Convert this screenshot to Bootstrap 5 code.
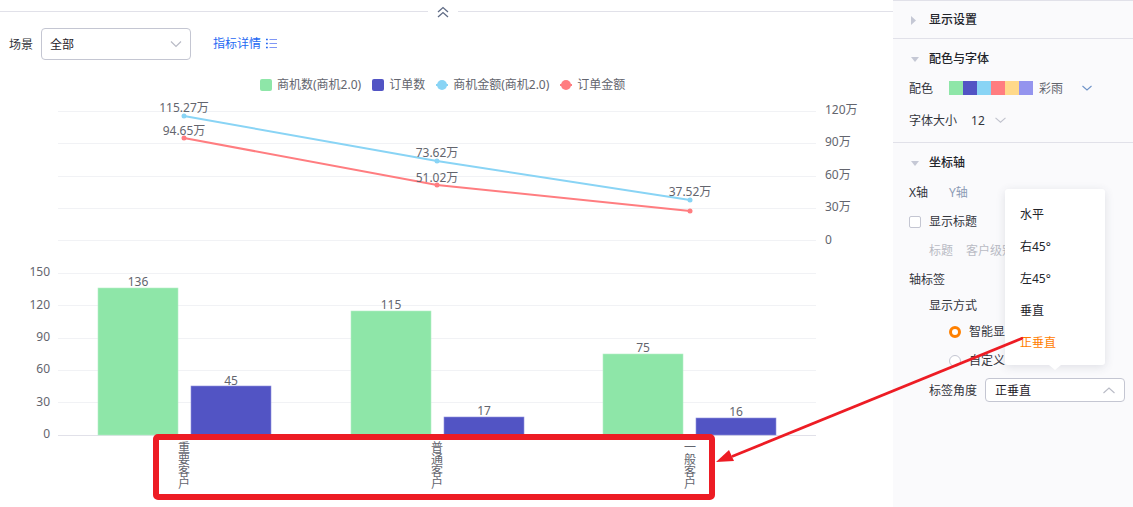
<!DOCTYPE html>
<html lang="zh-CN">
<head>
<meta charset="utf-8">
<title>图表设置</title>
<link href="https://cdn.jsdelivr.net/npm/bootstrap@5.3.0/dist/css/bootstrap.min.css" rel="stylesheet">
<style>
html,body{height:507px;overflow:hidden;background:#fff}
body{position:relative;font:12px/1.2 "Noto Sans","Noto Sans CJK SC",sans-serif;color:#33353c}
svg text{font-family:"Noto Sans","Noto Sans CJK SC",sans-serif;font-size:12px;fill:#63656e}
.page-wrap{width:1133px;height:507px}
.main-col{width:893px;flex:none}
.fold-row{height:22px}
.fold-line{height:1px;background:#e1e1e9}
.fold-line-a{width:428px}
.fold-line-b{width:435px}
.fold-ico{width:30px;height:16px}
.filter-row{height:44px;padding-left:9px}
.filter-row>span,.scene-box>span,.angle-box>span,.set-row>span,.ind-1>span,.ind-2>span{padding-top:2px}
.set-row>.color-strip{padding-top:0}
.scene-box{width:150px;height:32px;border:1px solid #c4c6d2;border-radius:4px;padding:0 8px;margin-left:8px;margin-right:22px;color:#1f2128;background:#fff}
.detail-link{color:#2468f2;text-decoration:none;gap:5px}
.legend-row{height:34px;padding-left:260px;padding-top:4px;color:#63656e;font-size:12px}
.lg-sq{width:12px;height:12px;border-radius:2px;margin-right:5px}
.lg-mark{width:12px;height:10px;margin-right:5px}
.lg-text{margin-right:11px}
.lg-text-wide{margin-right:11px}
.c-a{background:#8ee6a8}.c-b{background:#5254c4}.c-c{background:#89d4f5}.c-d{background:#ff7d80}.c-e{background:#ffd98a}.c-f{background:#9494ee}
.chart-box{display:block;width:893px;height:407px}
.side-col{width:240px;flex:none;background:#fafafc;height:507px;border-top:1px solid #e1e1e9}
.side-sec{border-bottom:1px solid #e1e1e9}
.sec-a{height:38px;padding-top:5px}.sec-b{height:104px;padding-top:6px}.sec-c{padding-top:6px}
.sec-title{height:26px;font-weight:500;color:#22242a;padding-left:18px;padding-top:2px}
.tri{width:18px;flex:none}
.set-row{padding-left:16px}
.set-h32{height:32px}
.sec-title+.set-h32{margin-top:1px}
.color-strip{margin-left:16px;margin-right:6px}
.color-strip i{display:block;width:14px;height:14px}
.muted-name{color:#63656e;width:43px}
.font-num{margin-left:14px;width:24px}
.h29{height:29px}.h28{height:28px}.h25{height:25px}.h27{height:27px}.h31{height:31px}
.first-row{margin-top:3px}
.ind-1{padding-left:36px}.ind-2{padding-left:56px}
.y-tab{color:#8c9ab5;margin-left:21px}
.fake-check{width:12px;height:12px;border:1px solid #c4c6d2;border-radius:2px;background:#fff;margin-right:8px}
.grey-txt{color:#b9bbc4}
.level-txt{margin-left:13px}
.radio-on{width:12px;height:12px;border:3px solid #ff8000;border-radius:50%;background:#fff;margin-right:8px}
.radio-off{width:12px;height:12px;border:1px solid #c4c6d2;border-radius:50%;background:#fff;margin-right:8px}
.angle-box{width:140px;height:24px;border:1px solid #c4c6d2;border-radius:4px;margin-left:8px;padding:0 9px;background:#fff;color:#1f2128}
.angle-pop.dropdown-menu{position:absolute;left:1005px;top:189px;width:100px;height:176px;min-width:0;padding:10px 0 0;border:0;border-radius:3px;background:#fff;box-shadow:0 2px 10px rgba(60,65,90,.14);font-size:12px;display:block}
.angle-pop::after{content:"";position:absolute;left:44px;bottom:-5px;border:6px solid transparent;border-bottom:0;border-top:5px solid #fff}
.angle-pop .dropdown-item{height:32px;line-height:32px;padding:0 15px;color:#22242a}
.angle-pop .dropdown-item.picked{color:#ff7d00;background:none}
.mark-layer{position:absolute;left:0;top:0;width:1133px;height:507px;pointer-events:none;z-index:1001}
.axis-cat{writing-mode:vertical-rl;text-orientation:upright}
</style>
</head>
<body>
<div class="page-wrap d-flex">
  <main class="main-col">
    <div class="fold-row d-flex align-items-center">
      <div class="fold-line fold-line-a"></div>
      <svg class="fold-ico" viewBox="0 0 30 16"><path d="M10 9l5-4.500 5 4.500M10 14l5-4.500 5 4.500" fill="none" stroke="#5f6b85" stroke-width="1.300"/></svg>
      <div class="fold-line fold-line-b"></div>
    </div>
    <div class="filter-row d-flex align-items-center">
      <span>场景</span>
      <div class="scene-box d-flex align-items-center justify-content-between">
        <span>全部</span>
        <svg width="12" height="8" viewBox="0 0 12 8"><path d="M1 1.500l5 5 5-5" fill="none" stroke="#b9bbc6" stroke-width="1.200"/></svg>
      </div>
      <a class="detail-link d-flex align-items-center" href="#">指标详情
        <svg width="11" height="11" viewBox="0 0 11 11"><path d="M3.500 1.500H11M3.500 5.500H11M3.500 9.500H11" stroke="#8097f5" stroke-width="1.200"/><path d="M0 1.500h1.800M0 5.500h1.800M0 9.500h1.800" stroke="#2468f2" stroke-width="1.400"/></svg>
      </a>
    </div>
    <div class="legend-row d-flex align-items-center">
      <span class="lg-sq c-a"></span><span class="lg-text">商机数(商机2.0)</span>
      <span class="lg-sq c-b"></span><span class="lg-text">订单数</span>
      <svg class="lg-mark" viewBox="0 0 12 10"><path d="M0 5h12" stroke="#89d4f5" stroke-width="2"/><circle cx="6" cy="5" r="5" fill="#89d4f5"/></svg><span class="lg-text-wide">商机金额(商机2.0)</span>
      <svg class="lg-mark" viewBox="0 0 12 10"><path d="M0 5h12" stroke="#ff7d80" stroke-width="2"/><circle cx="6" cy="5" r="5" fill="#ff7d80"/></svg><span>订单金额</span>
    </div>
    <svg class="chart-box" viewBox="0 100 893 407">
      <g stroke="#f1f2f5" stroke-width="1">
        <path d="M58 111.500H816M58 143.500H816M58 176.500H816M58 208.500H816M58 240.500H816"/>
        <path d="M58 273.500H816M58 305.500H816M58 338.500H816M58 370.500H816M58 402.500H816"/>
      </g>
      <path d="M58 435.500H816" stroke="#e1e1e9"/>
      <g>
        <text x="825" y="114">120万</text><text x="825" y="146">90万</text><text x="825" y="179">60万</text><text x="825" y="211">30万</text><text x="825" y="244">0</text>
      </g>
      <g text-anchor="end">
        <text x="50" y="276">150</text><text x="50" y="309">120</text><text x="50" y="341">90</text><text x="50" y="373">60</text><text x="50" y="406">30</text><text x="50" y="438">0</text>
      </g>
      <g fill="#8ee6a8" stroke="#b5efc5" stroke-width=".6">
        <rect x="98" y="288" width="80" height="147"/>
        <rect x="351" y="311" width="80" height="124"/>
        <rect x="603" y="354" width="80" height="81"/>
      </g>
      <g fill="#5254c4" stroke="#8f90dc" stroke-width=".6">
        <rect x="191" y="386" width="80" height="49"/>
        <rect x="444" y="417" width="80" height="18"/>
        <rect x="696" y="418" width="80" height="17"/>
      </g>
      <g text-anchor="middle">
        <text x="138" y="286">136</text><text x="231" y="385">45</text><text x="391" y="309">115</text><text x="484" y="415">17</text><text x="643" y="352">75</text><text x="736" y="416">16</text>
      </g>
      <path d="M184 116L437 161L690 200" fill="none" stroke="#89d4f5" stroke-width="2"/>
      <path d="M184 138L437 185L690 211" fill="none" stroke="#ff7d80" stroke-width="2"/>
      <g fill="#89d4f5"><circle cx="184" cy="116" r="2.500"/><circle cx="437" cy="161" r="2.500"/><circle cx="690" cy="200" r="2.500"/></g>
      <g fill="#ff7d80"><circle cx="184" cy="138" r="2.500"/><circle cx="437" cy="185" r="2.500"/><circle cx="690" cy="211" r="2.500"/></g>
      <g text-anchor="middle">
        <text x="184" y="112">115.27万</text><text x="184" y="135">94.65万</text>
        <text x="437" y="157">73.62万</text><text x="437" y="182">51.02万</text>
        <text x="690" y="196">37.52万</text>
      </g>
      <g>
        <text class="axis-cat" x="183" y="441">重要客户</text>
        <text class="axis-cat" x="436" y="441">普通客户</text>
        <text class="axis-cat" x="689" y="441">一般客户</text>
      </g>
    </svg>
  </main>

  <aside class="side-col">
    <section class="side-sec sec-a">
      <div class="sec-title d-flex align-items-center">
        <span class="tri"><svg width="6" height="9" viewBox="0 0 6 9"><path d="M0 0l5 4.500L0 9z" fill="#c5c8d5"/></svg></span>显示设置
      </div>
    </section>
    <section class="side-sec sec-b">
      <div class="sec-title d-flex align-items-center">
        <span class="tri"><svg width="8" height="5" viewBox="0 0 8 5"><path d="M0 0h8L4 5z" fill="#c5c8d5"/></svg></span>配色与字体
      </div>
      <div class="set-row set-h32 d-flex align-items-center">
        <span>配色</span>
        <span class="color-strip d-flex"><i class="c-a"></i><i class="c-b"></i><i class="c-c"></i><i class="c-d"></i><i class="c-e"></i><i class="c-f"></i></span>
        <span class="muted-name">彩雨</span>
        <svg width="10" height="6" viewBox="0 0 10 6"><path d="M.5 1l4.500 4 4.500-4" fill="none" stroke="#6f93c8" stroke-width="1.100"/></svg>
      </div>
      <div class="set-row set-h32 d-flex align-items-center">
        <span>字体大小</span>
        <span class="font-num">12</span>
        <svg width="11" height="6" viewBox="0 0 11 6"><path d="M.5 .8l5 4.400 5-4.400" fill="none" stroke="#c0c2cd" stroke-width="1.100"/></svg>
      </div>
    </section>
    <section class="sec-c">
      <div class="sec-title d-flex align-items-center">
        <span class="tri"><svg width="8" height="5" viewBox="0 0 8 5"><path d="M0 0h8L4 5z" fill="#c5c8d5"/></svg></span>坐标轴
      </div>
      <div class="set-row first-row h29 d-flex align-items-center"><span>X轴</span><span class="y-tab">Y轴</span></div>
      <div class="set-row h29 d-flex align-items-center"><span class="fake-check"></span><span>显示标题</span></div>
      <div class="ind-1 h29 d-flex align-items-center grey-txt text-nowrap overflow-hidden"><span>标题</span><span class="level-txt">客户级别</span></div>
      <div class="set-row h28 d-flex align-items-center"><span>轴标签</span></div>
      <div class="ind-1 h25 d-flex align-items-center"><span>显示方式</span></div>
      <div class="ind-2 h27 d-flex align-items-center"><span class="radio-on"></span><span>智能显示</span></div>
      <div class="ind-2 h31 d-flex align-items-center"><span class="radio-off"></span><span>自定义</span></div>
      <div class="ind-1 h28 d-flex align-items-center">
        <span>标签角度</span>
        <div class="angle-box d-flex align-items-center justify-content-between">
          <span>正垂直</span>
          <svg width="12" height="7" viewBox="0 0 12 7"><path d="M.5 6l5.500-5 5.500 5" fill="none" stroke="#b9bbc6" stroke-width="1.100"/></svg>
        </div>
      </div>
    </section>
  </aside>
</div>

<div class="angle-pop dropdown-menu show">
  <a class="dropdown-item" href="#">水平</a>
  <a class="dropdown-item" href="#">右45°</a>
  <a class="dropdown-item" href="#">左45°</a>
  <a class="dropdown-item" href="#">垂直</a>
  <a class="dropdown-item picked" href="#">正垂直</a>
</div>

<svg class="mark-layer" viewBox="0 0 1133 507">
  <rect x="156" y="437" width="556" height="60" rx="2" fill="none" stroke="#ed1c24" stroke-width="6"/>
  <path d="M1023 338L732 456.500" stroke="#ed1c24" stroke-width="2.800"/>
  <path d="M716 462L729 450L734 461z" fill="#ed1c24"/>
</svg>
</body>
</html>
